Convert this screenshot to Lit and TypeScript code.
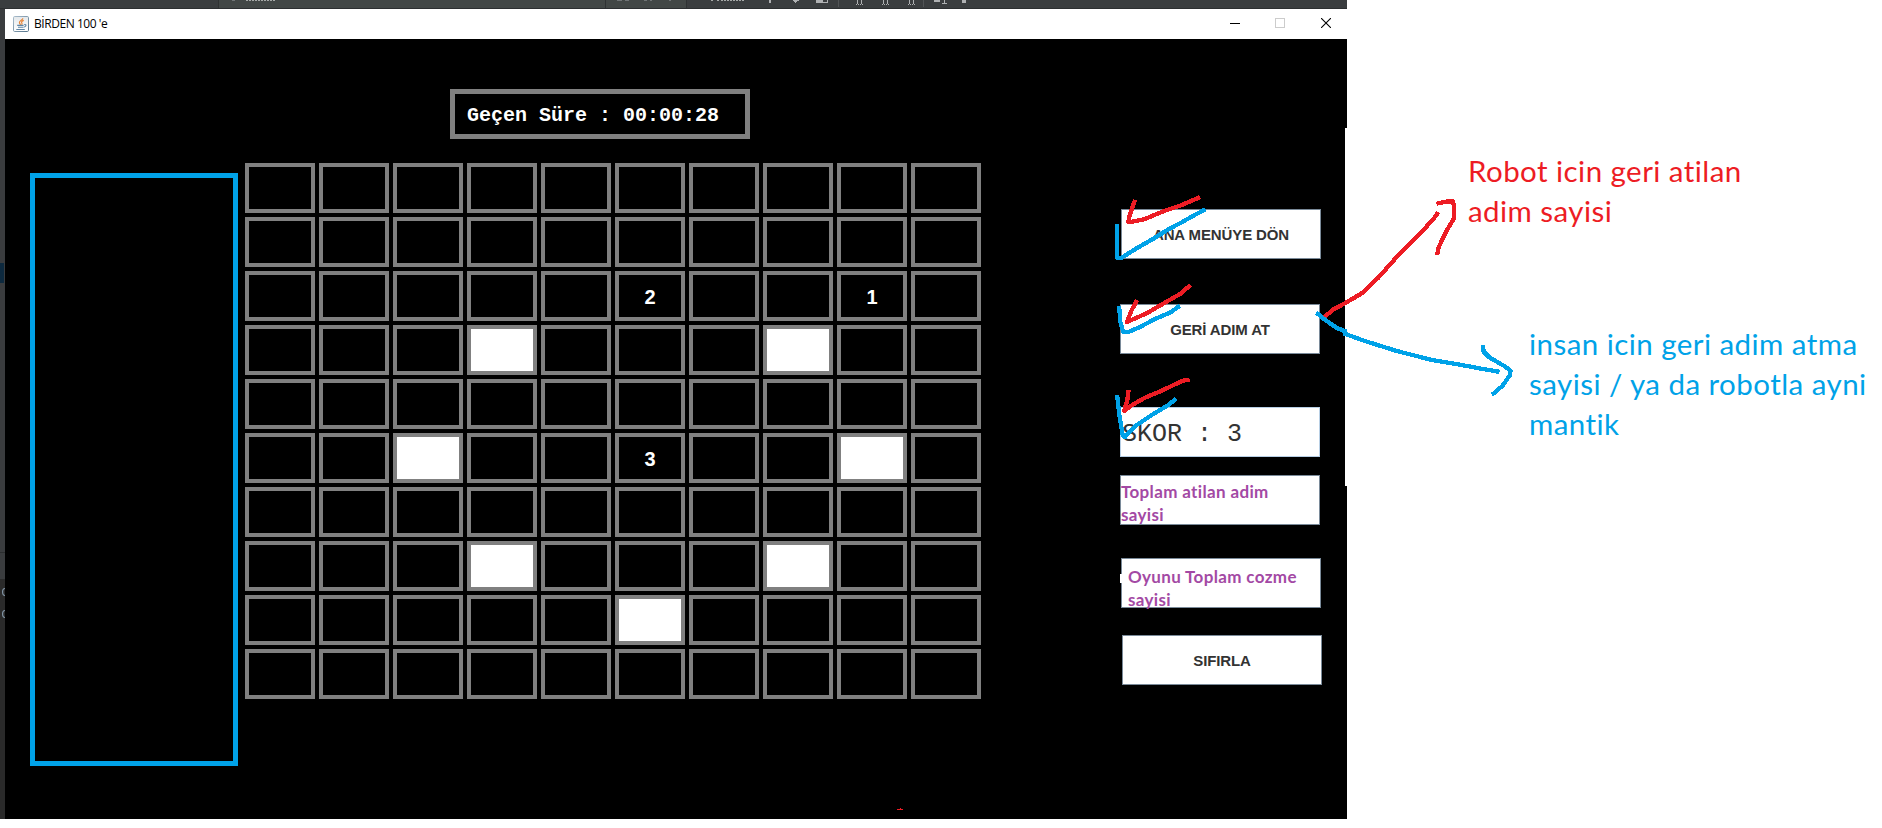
import { LitElement, html, svg, css } from "lit";
import { customElement, property } from "lit/decorators.js";
import { classMap } from "lit/directives/class-map.js";

const SIZE = 10;
const numbers: Record<string, string> = { "2-5": "2", "2-8": "1", "5-5": "3" };
const blanks = new Set(["3-3", "3-7", "5-2", "5-8", "7-3", "7-7", "8-5"]);

const RED = "#ed1c24";
const BLUE = "#00a2e8";

// Freehand strokes of the notes, as point lists.
const strokes: Array<[string, string]> = [
  [RED, "1198,198 1190,201.5 1180,205.7 1163.3,211.3 1145,219 1136,221 1128.3,222.3 1129.5,216 1134.3,202"],
  [BLUE, "1203.5,210.3 1191,217 1180,223.3 1168.3,229.3 1153,239 1138.3,247.3 1121,258 1117.3,258 1117.3,226"],
  [RED, "1189,286.3 1180,294 1168.3,300.7 1146.7,313.3 1127,322 1131.5,310.5 1136,302"],
  [BLUE, "1178,307 1170,312.7 1155,319 1140,327 1128.3,332 1123.3,332.3 1120.3,321.7 1119.3,308"],
  [RED, "1187.5,380 1182.7,380.7 1161.7,390.7 1145,397.7 1133,404.5 1124,411 1127.3,400.7 1128.3,392"],
  [BLUE, "1174.5,400 1168.3,405 1153.3,414 1136.7,425 1125,437 1122.7,435 1119.3,415 1117.3,397"],
  [RED, "1325.5,316 1334,309 1345,303.3 1361.7,293.3 1378.3,277.7 1400,253.3 1423.3,230 1433.3,219.3 1437,214"],
  [RED, "1438.5,203.3 1446.7,201.5 1452.7,201.3 1454.3,206.7 1454,218.3 1447,230 1441.7,240.7 1438.5,248 1437.5,253"],
  [BLUE, "1318,314 1324,319 1330,323.3 1337,328 1344.5,331"],
  [BLUE, "1345.5,334 1363.3,340.5 1396.7,351 1433.3,360.3 1460,364.7 1480,368.5 1497.5,371.5"],
  [BLUE, "1483,347 1483.7,351.7 1489.3,357.3 1504.2,366 1510.5,370.5 1510,375 1502.3,386 1493.5,393.5"],
];

@customElement("game-board")
class GameBoard extends LitElement {
  static styles = css`
    :host { display: grid; grid-template-columns: repeat(10, 70px); grid-auto-rows: 50px; gap: 4px; }
    .cell {
      box-sizing: border-box; border: 4px solid #808080; background: #000; color: #fff;
      display: flex; align-items: center; justify-content: center; padding-top: 1px;
      font: bold 20px/22px "Liberation Sans", Arial, sans-serif;
    }
    .blank { background: #fff; }
  `;
  render() {
    return Array.from({ length: SIZE * SIZE }, (_, i) => {
      const key = `${Math.floor(i / SIZE)}-${i % SIZE}`;
      return html`<div class=${classMap({ cell: true, blank: blanks.has(key) })}>${numbers[key] ?? ""}</div>`;
    });
  }
}

@customElement("title-bar")
class TitleBar extends LitElement {
  @property() caption = "";
  static styles = css`
    :host { display: flex; align-items: center; height: 30px; background: #fff; padding: 0 16px 0 8px; box-sizing: border-box; }
    .logo { margin-top: -1px; }
    .caption { flex: 1; margin-left: 5px; font: 12px/16px "Open Sans", "Noto Sans", sans-serif; letter-spacing: -0.45px; color: #000; }
    .controls { display: flex; gap: 35px; margin-top: -2px; }
    svg { display: block; }
    .restore { margin-right: 1px; }
  `;
  render() {
    return html`
      <svg class="logo" width="16" height="16" viewBox="0 0 16 16">
        <defs><linearGradient id="f" x1="0" y1="0" x2="1" y2="1"><stop offset="0" stop-color="#a9bccb"/><stop offset="1" stop-color="#54748b"/></linearGradient>
        <linearGradient id="b" x2="0" y2="1"><stop offset="0" stop-color="#e4e8eb"/><stop offset="1" stop-color="#fff"/></linearGradient></defs>
        <rect x=".5" y=".5" width="15" height="15" rx="1.2" fill="url(#b)" stroke="url(#f)"/>
        <path d="M9.8 2.2C10 4 6.2 4.6 6.4 6.6 6.5 7.5 7.4 8 7.6 8.8M10.8 4.4C8.8 5 8 6 8.8 6.8 9.4 7.5 9 8 8.6 8.8" fill="none" stroke="#e8863a" stroke-width="1.2"/>
        <path d="M4.2 9.4H10.6M11.2 8.6C13.8 8.3 13.4 10.6 11 11M5 11.3H10.6M3.3 13.5H11.8" fill="none" stroke="#5f86a6" stroke-width="1.1"/>
      </svg>
      <div class="caption">${this.caption}</div>
      <div class="controls">
        <svg width="10" height="10"><path d="M0 5.5H10" stroke="#000"/></svg>
        <svg class="restore" width="10" height="10"><rect x=".5" y=".5" width="9" height="9" fill="none" stroke="#ccc"/></svg>
        <svg width="10" height="10"><path d="M0 0L10 10M10 0L0 10" stroke="#000" stroke-width="1.1"/></svg>
      </div>`;
  }
}

@customElement("app-root")
class AppRoot extends LitElement {
  static styles = css`
    :host { display: block; position: relative; width: 1882px; height: 828px; background: #fff; overflow: hidden; }
    .page { display: flex; height: 828px; }
    .desktop { width: 1347px; height: 819px; display: grid; grid-template: 9px 1fr / 5px 1fr; }
    .strip { grid-column: 1 / 3; }
    .strip svg, .gutter svg { display: block; }
    .window { display: flex; flex-direction: column; background: #000; }
    .body { display: grid; grid-template-columns: 208px 700px 1fr; height: 780px; padding-left: 25px; box-sizing: border-box; background: #000; }
    .list { box-sizing: border-box; border: 5px solid #00a2e8; height: 593px; margin-top: 134px; }
    .center { display: flex; flex-direction: column; padding-left: 7px; gap: 24px; margin-top: 50px; width: 736px; }
    .timer {
      box-sizing: border-box; width: 300px; height: 50px; margin-left: 205px; border: 5px solid #808080; color: #fff;
      display: flex; align-items: center; padding: 3px 0 0 12px; white-space: pre;
      font: bold 20px/24px "Liberation Mono", "Courier New", monospace;
    }
    .side { display: flex; flex-direction: column; margin: 170px 0 0 182px; }
    .box {
      box-sizing: border-box; width: 200px; height: 50px; border: 1px solid #7a8a99; background: #fff; color: #333;
      display: flex; align-items: center; justify-content: center; padding-top: 1px;
      font: bold 15px/18px "Liberation Sans", Arial, sans-serif; letter-spacing: -0.12px;
    }
    .menu { margin-left: 1px; }
    .back { margin-top: 45px; }
    .score {
      margin-top: 53px; border-color: #b8cfe5; justify-content: flex-start; padding: 5px 0 0 1px; white-space: pre;
      font: 25px/28px "Liberation Mono", "Courier New", monospace; letter-spacing: 0;
    }
    .steps, .solved {
      justify-content: flex-start; align-items: flex-start; color: #a349a4; white-space: pre;
      font: bold 17px/23px Lato, "Open Sans", sans-serif; letter-spacing: 0.35px; font-variant-ligatures: none;
    }
    .steps { margin-top: 18px; padding: 4px 0 0 0; }
    .solved { margin: 33px 0 0 1px; padding: 6px 0 0 6px; }
    .reset { margin: 27px 0 0 2px; }
    .notes { flex: 1; display: flex; flex-direction: column; }
    .note { margin: 0; font: 29.5px/40px Lato, "Open Sans", sans-serif; letter-spacing: 0.45px; font-variant-ligatures: none; white-space: pre; }
    .robot { color: #ed1c24; padding: 151px 0 0 121px; }
    .human { color: #00a2e8; padding: 93px 0 0 182px; }
    .ink { position: absolute; left: 0; top: 0; pointer-events: none; }
  `;

  render() {
    return html`
      <div class="page">
        <div class="desktop">
          <div class="strip">
            <svg width="1347" height="9" shape-rendering="crispEdges">
              <rect width="1347" height="9" fill="#3a3d3f"/>
              <rect x="219" width="467" height="9" fill="#424746"/>
              <path d="M218.5 0V9M605.5 0V9M686.5 0V9" stroke="#2f3233"/>
              <path d="M838.5 0V7M923.5 0V7" stroke="#515456"/>
              <path d="M0 8.5H1347" stroke="#2c2f31"/>
              <path d="M232 0H235V1H232ZM617 0H622V1H617ZM625 0H629V1H625ZM644 0H647V1H644ZM650 0H652V1H650ZM669 0H671V1H669Z" fill="#707476"/>
              <path d="M246 .5H275M710.5 .5H713M717 .5H719M721 .5H744" stroke="#a6a9a8" stroke-width="1" stroke-dasharray="2 1"/>
              <path d="M769 0H771V3H769ZM793 0H799V1H797V2H796V3H795V2H794V1H793ZM816 0H828V3H816ZM934 0H940V2H934ZM944 0H945V3H947V4H942V3H944ZM962 0H966V3H962Z" fill="#afb1b3"/>
              <rect x="823" y="0" width="4" height="2" fill="#3a3d3f"/>
              <path d="M857.5 0V4M861.5 0V4M883.5 0V4M887.5 0V4M909.5 0V4M913.5 0V4" stroke="#afb1b3"/>
              <path d="M856 4.5H863M882 4.5H889M908 4.5H915" stroke="#afb1b3" stroke-dasharray="1 1"/>
            </svg>
          </div>
          <div class="gutter">
            <svg width="5" height="810">
              <rect width="5" height="810" fill="#3a3c3e"/>
              <rect y="254" width="4" height="20" fill="#0d293e"/>
              <rect y="543" width="5" height="1" fill="#2b2d2e"/>
              <rect y="570" width="5" height="240" fill="#2a2a2a"/>
              <path d="M5 579.5C1.8 579.5 1.8 586.5 5 586.5M5 601.5C1.8 601.5 1.8 608.5 5 608.5" fill="none" stroke="#8295a5" stroke-width="1.2"/>
            </svg>
          </div>
          <div class="window">
            <title-bar caption="BİRDEN 100 'e"></title-bar>
            <div class="body">
              <div class="list"></div>
              <div class="center">
                <div class="timer">Geçen Süre : 00:00:28</div>
                <game-board></game-board>
              </div>
              <div class="side">
                <div class="box menu">ANA MENÜYE DÖN</div>
                <div class="box back">GERİ ADIM AT</div>
                <div class="box score">SKOR : 3</div>
                <div class="box steps">Toplam atilan adim
sayisi</div>
                <div class="box solved">Oyunu Toplam cozme
sayisi</div>
                <div class="box reset">SIFIRLA</div>
              </div>
            </div>
          </div>
        </div>
        <div class="notes">
          <p class="note robot">Robot icin geri atilan
adim sayisi</p>
          <p class="note human">insan icin geri adim atma
sayisi / ya da robotla ayni
mantik</p>
        </div>
      </div>
      <svg class="ink" width="1882" height="828">
        <rect x="1345" y="128" width="2" height="358" fill="#fff"/>
        <rect x="1120" y="574" width="2" height="9" fill="#fff"/>
        <path d="M897 809H903V810H897ZM900 808H901V809H900Z" fill="#ed1c24"/>
        ${strokes.map(([color, points]) => svg`<polyline points=${points} fill="none" stroke=${color} stroke-width="4.3" stroke-linejoin="round" stroke-linecap="square" shape-rendering="crispEdges"/>`)}
      </svg>`;
  }
}
